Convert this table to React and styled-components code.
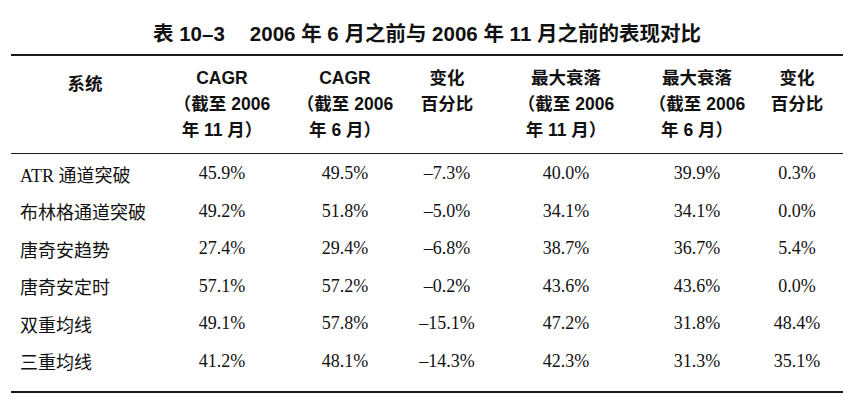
import React from 'react';
import styled, { createGlobalStyle } from 'styled-components';

const GlobalStyle = createGlobalStyle`
	html, body {
		margin: 0;
		padding: 0;
		background: #ffffff;
	}
`;

const Page = styled.div`
	width: 868px;
	height: 406px;
	padding: 0 25px 0 11px;
	box-sizing: border-box;
	color: #111;
	overflow: hidden;
`;

const Caption = styled.div`
	display: flex;
	justify-content: center;
	gap: 25px;
	padding-top: 23px;
	height: 32px;
	box-sizing: content-box;
	font-family: 'Liberation Sans', 'Noto Sans CJK SC', sans-serif;
	font-weight: bold;
	font-size: 20.5px;
	line-height: 22px;
	white-space: nowrap;
	margin-bottom: -1px;
`;

const Table = styled.table`
	width: 832px;
	border-collapse: collapse;
	table-layout: fixed;
	border-top: 2px solid #1a1a1a;
	border-bottom: 2px solid #1a1a1a;
`;

const HeadRow = styled.tr`
	border-bottom: 1.5px solid #1a1a1a;
`;

const HeadCell = styled.th`
	font-family: 'Liberation Sans', 'Noto Sans CJK SC', sans-serif;
	font-weight: bold;
	font-size: 17.5px;
	line-height: 26px;
	text-align: center;
	vertical-align: top;
	padding: ${props => (props.offset ? '15px 0 0' : '9px 0 10px')};
	white-space: nowrap;
`;

const Cell = styled.td`
	font-family: 'Liberation Serif', 'Noto Sans CJK SC', serif;
	font-size: 18px;
	height: 37.5px;
	padding: 0 0 0 ${props => (props.name ? '9px' : '0')};
	text-align: ${props => (props.name ? 'left' : 'center')};
	vertical-align: middle;
	white-space: nowrap;
`;

const Spacer = styled.td`
	height: ${props => props.size}px;
	padding: 0;
`;

const widths = [148, 126, 120, 84, 154, 108, 92];

const headers = [
	['系统'],
	['CAGR', '（截至 2006', '年 11 月）'],
	['CAGR', '（截至 2006', '年 6 月）'],
	['变化', '百分比'],
	['最大衰落', '（截至 2006', '年 11 月）'],
	['最大衰落', '（截至 2006', '年 6 月）'],
	['变化', '百分比']
];

const rows = [
	['ATR 通道突破', '45.9%', '49.5%', '–7.3%', '40.0%', '39.9%', '0.3%'],
	['布林格通道突破', '49.2%', '51.8%', '–5.0%', '34.1%', '34.1%', '0.0%'],
	['唐奇安趋势', '27.4%', '29.4%', '–6.8%', '38.7%', '36.7%', '5.4%'],
	['唐奇安定时', '57.1%', '57.2%', '–0.2%', '43.6%', '43.6%', '0.0%'],
	['双重均线', '49.1%', '57.8%', '–15.1%', '47.2%', '31.8%', '48.4%'],
	['三重均线', '41.2%', '48.1%', '–14.3%', '42.3%', '31.3%', '35.1%']
];

export default function App() {
	return (
		<Page>
			<GlobalStyle />
			<Caption>
				<span>表 10–3</span>
				<span>2006 年 6 月之前与 2006 年 11 月之前的表现对比</span>
			</Caption>
			<Table>
				<colgroup>
					{widths.map((w, i) => (
						<col key={i} style={{ width: w }} />
					))}
				</colgroup>
				<thead>
					<HeadRow>
						{headers.map((lines, i) => (
							<HeadCell key={i} offset={i === 0 ? 1 : 0}>
								{lines.map((line, j) => (
									<div key={j}>{line}</div>
								))}
							</HeadCell>
						))}
					</HeadRow>
				</thead>
				<tbody>
					<tr>
						<Spacer size={1} colSpan={7} />
					</tr>
					{rows.map(row => (
						<tr key={row[0]}>
							{row.map((value, i) => (
								<Cell key={i} name={i === 0 ? 1 : 0}>
									{value}
								</Cell>
							))}
						</tr>
					))}
					<tr>
						<Spacer size={11} colSpan={7} />
					</tr>
				</tbody>
			</Table>
		</Page>
	);
}
